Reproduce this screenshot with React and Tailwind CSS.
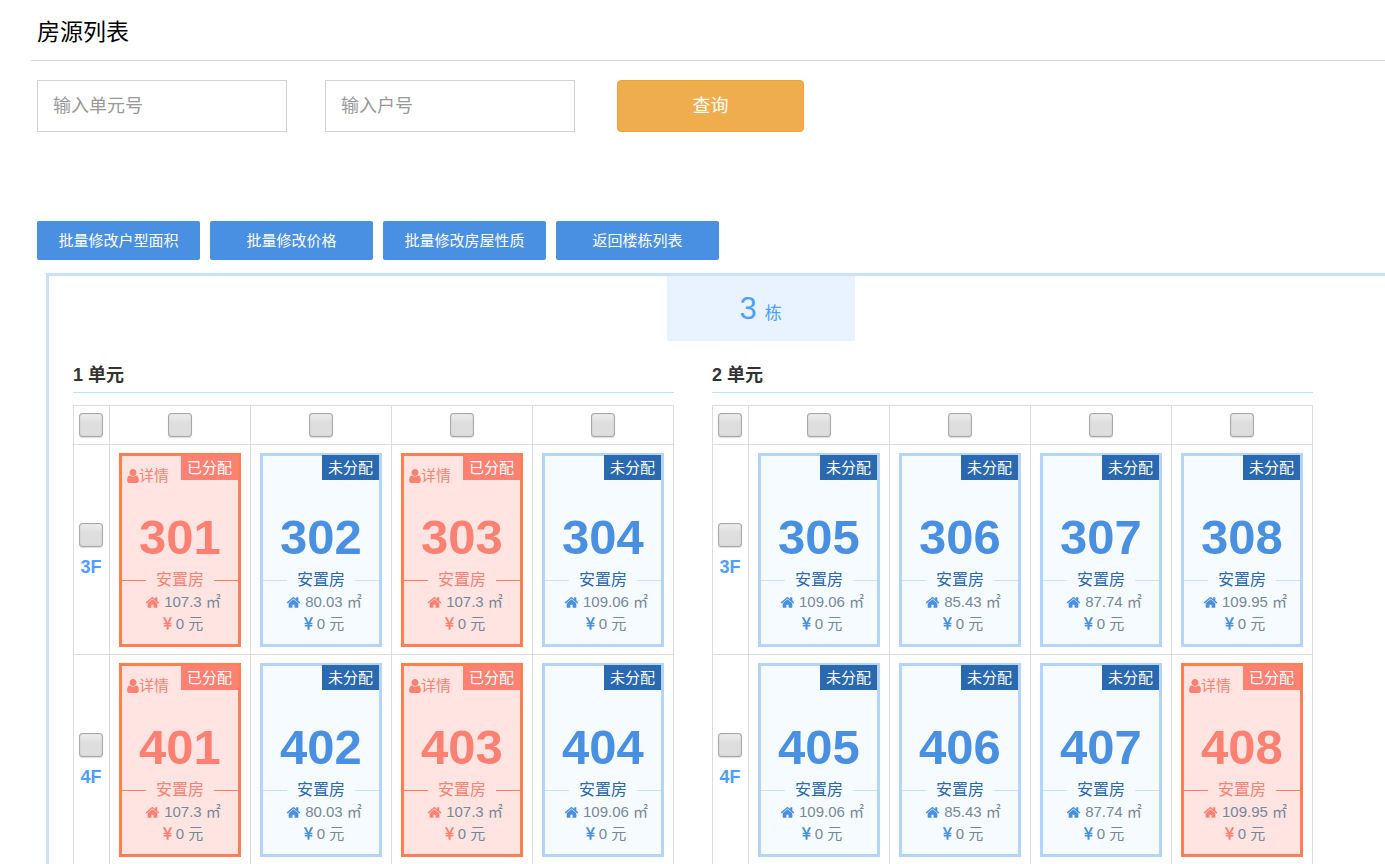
import React, { useState } from "react";

const HOME_PATH =
  "M1472 992v480q0 26-19 45t-45 19h-384v-384h-256v384h-384q-26 0-45-19t-19-45v-480q0-1 .5-3t.5-3l575-474 575 474q1 2 1 6zm223-69l-62 74q-8 9-21 11h-3q-13 0-21-7l-692-577-692 577q-12 8-24 7-13-2-21-11l-62-74q-8-10-7-23.5t11-21.5l719-599q32-26 76-26t76 26l244 204v-195q0-14 9-23t23-9h192q14 0 23 9t9 23v408l219 182q10 8 11 21.5t-7 23.5z";
const USER_PATH =
  "M1536 1399q0 109-62.5 187t-150.5 78h-854q-88 0-150.5-78t-62.5-187q0-85 8.5-160.5t31.5-152 58.5-131 94-89 134.5-34.5q131 128 313 128t313-128q76 0 134.5 34.5t94 89 58.5 131 31.5 152 8.5 160.5zm-256-887q0 159-112.5 271.5t-271.5 112.5-271.5-112.5-112.5-271.5 112.5-271.5 271.5-112.5 271.5 112.5 112.5 271.5z";
const YEN_PATH =
  "M985.5 1536h-172q-13 0-22.5-9t-9.5-23v-330h-288q-13 0-22.5-9t-9.5-23v-103q0-13 9.5-22.5t22.5-9.5h288v-85h-288q-13 0-22.5-9t-9.5-23v-104q0-13 9.5-22.5t22.5-9.5h214l-321-578q-8-16 0-32 10-16 28-16h194q19 0 29 18l215 425q19 38 56 125 10-24 30.5-68t27.5-61l191-420q8-19 29-19h191q17 0 27 16 9 14 1 31l-313 579h215q13 0 22.5 9.5t9.5 22.5v104q0 14-9.5 23t-22.5 9h-290v85h290q13 0 22.5 9.5t9.5 22.5v103q0 14-9.5 23t-22.5 9h-290v330q0 13-9.5 22.5t-22.5 9.5z";

const actions = ["批量修改户型面积", "批量修改价格", "批量修改房屋性质", "返回楼栋列表"];

const units = [
  {
    id: 1,
    floors: [
      {
        name: "3F",
        rooms: [
          { no: "301", area: "107.3", assigned: true },
          { no: "302", area: "80.03" },
          { no: "303", area: "107.3", assigned: true },
          { no: "304", area: "109.06" },
        ],
      },
      {
        name: "4F",
        rooms: [
          { no: "401", area: "107.3", assigned: true },
          { no: "402", area: "80.03" },
          { no: "403", area: "107.3", assigned: true },
          { no: "404", area: "109.06" },
        ],
      },
    ],
  },
  {
    id: 2,
    floors: [
      {
        name: "3F",
        rooms: [
          { no: "305", area: "109.06" },
          { no: "306", area: "85.43" },
          { no: "307", area: "87.74" },
          { no: "308", area: "109.95" },
        ],
      },
      {
        name: "4F",
        rooms: [
          { no: "405", area: "109.06" },
          { no: "406", area: "85.43" },
          { no: "407", area: "87.74" },
          { no: "408", area: "109.95", assigned: true },
        ],
      },
    ],
  },
];

function Checkbox(props) {
  return (
    <input
      type="checkbox"
      className="block size-6 mx-auto appearance-none rounded-[3px] border border-[#a9a9a9] bg-linear-to-b from-[#ededed] from-0% to-[#dedede] to-40% shadow-[0_1px_1px_#dddddd,inset_0_0_1px_#999999] checked:to-[#4a90e2]"
      {...props}
    />
  );
}

function RoomCard({ room }) {
  const on = room.assigned;
  const accent = on ? "text-[#fc8172]" : "text-[#4a90e2]";
  const line = on ? "bg-[#ff7f50]" : "bg-[#c6e2ff]";

  return (
    <div
      className={
        "relative h-[194px] border-3 text-center " +
        (on ? "border-[#ff7f50] bg-[#ffe4e1]" : "border-[#b3d4ff] bg-[#f6fbff]")
      }
    >
      {/* Status badge */}
      <span
        className={
          "absolute -top-px right-0 w-[57px] h-[25px] text-[15px] leading-[25px] text-white " +
          (on ? "bg-[#fc8172]" : "bg-[#2a68af]")
        }
      >
        {on ? "已分配" : "未分配"}
      </span>

      <div className="h-[53px] pt-2 pl-[5px]">
        {on && (
          <a href="#" className="flex w-max items-center text-[15px] leading-6 text-[#fc8172]">
            <svg viewBox="256 128 1280 1536" fill="currentColor" className="w-3 h-[14px]">
              <path d={USER_PATH} />
            </svg>
            详情
          </a>
        )}
      </div>

      <div className={"text-[49px] leading-[57px] font-bold " + accent}>{room.no}</div>

      {/* House type between two rules */}
      <div className="flex h-7 items-center">
        <span className={"h-px flex-1 " + line}></span>
        <span className={"w-[68px] text-[16px] leading-6 " + (on ? "text-[#fc8172]" : "text-[#2a68af]")}>
          安置房
        </span>
        <span className={"h-px flex-1 " + line}></span>
      </div>

      <div className="-mt-[3px] flex items-center justify-center gap-1 pl-[6px] text-[15px] leading-[22px] text-[#778899]">
        <svg viewBox="0 0 1792 1792" fill="currentColor" className={"size-[15px] " + accent}>
          <path d={HOME_PATH} />
        </svg>
        {room.area} ㎡
      </div>
      <div className="flex items-center justify-center gap-1 pl-[6px] text-[15px] leading-[22px] text-[#778899]">
        <svg viewBox="384 0 1024 1792" fill="currentColor" className={"w-[9px] h-4 " + accent}>
          <path d={YEN_PATH} />
        </svg>
        0 元
      </div>
    </div>
  );
}

function Unit({ unit }) {
  return (
    <section className="flex-1">
      <h2 className="border-b border-[#b3e5fc] text-[18px] leading-[34px] font-bold text-[#333333]">
        {unit.id} 单元
      </h2>
      <table className="mt-3 w-full table-fixed border-collapse">
        <thead>
          <tr>
            <th className="w-[36px] h-[39px] border border-[#dddddd] p-0 pr-px">
              <Checkbox aria-label={unit.id + "单元全选"} />
            </th>
            {unit.floors[0].rooms.map((room, i) => (
              <th key={room.no} className="border border-[#dddddd] p-0">
                <Checkbox aria-label={unit.id + "单元第" + (i + 1) + "列"} />
              </th>
            ))}
          </tr>
        </thead>
        <tbody>
          {unit.floors.map((floor) => {
            const id = "floor-" + unit.id + "-" + floor.name;
            return (
              <tr key={floor.name}>
                <td className="border border-[#dddddd] p-0 pt-[2px] pr-px text-center">
                  <Checkbox id={id} />
                  <label htmlFor={id} className="mt-2 block text-[18px] leading-6 font-bold text-[#4d9fff]">
                    {floor.name}
                  </label>
                </td>
                {floor.rooms.map((room) => (
                  <td key={room.no} className="border border-[#dddddd] px-[9px] pt-2 pb-[7px]">
                    <RoomCard room={room} />
                  </td>
                ))}
              </tr>
            );
          })}
        </tbody>
      </table>
    </section>
  );
}

function App() {
  const [unitNo, setUnitNo] = useState("");
  const [roomNo, setRoomNo] = useState("");

  const inputClass =
    "w-[250px] h-[52px] border border-[#d3d3d3] bg-white px-[15px] text-[18px] text-[#333333] placeholder:text-[#999999]";

  return (
    <div className="h-screen overflow-x-hidden overflow-y-auto [scrollbar-width:none] bg-white font-['Liberation_Sans','Noto_Sans_CJK_SC',sans-serif]">
      <h1 className="ml-[31px] border-b border-[#d8d8d8] pt-3 pb-2 pl-[6px] text-[23px] leading-10 text-black">
        房源列表
      </h1>

      {/* Search */}
      <form className="mt-[19px] flex pl-[37px]" onSubmit={(e) => e.preventDefault()}>
        <input
          type="text"
          aria-label="单元号"
          placeholder="输入单元号"
          value={unitNo}
          onChange={(e) => setUnitNo(e.target.value)}
          className={inputClass}
        />
        <input
          type="text"
          aria-label="户号"
          placeholder="输入户号"
          value={roomNo}
          onChange={(e) => setRoomNo(e.target.value)}
          className={inputClass + " ml-[38px]"}
        />
        <button
          type="submit"
          className="ml-[42px] w-[187px] h-[52px] rounded-[4px] border border-[#eba23b] bg-[#f0ad4e] text-[18px] text-white"
        >
          查询
        </button>
      </form>

      {/* Batch actions */}
      <div className="mt-[89px] flex gap-[10px] pl-[37px]">
        {actions.map((text) => (
          <button
            key={text}
            type="button"
            className="w-[163px] h-[39px] rounded-[2px] bg-[#4a90e2] pt-px text-[15px] text-white"
          >
            {text}
          </button>
        ))}
      </div>

      {/* Building */}
      <div className="mt-[13px] ml-[46px] -mr-[90px] border-3 border-[#c6e2ff] pl-6 pr-[159px]">
        <div className="-mr-[135px] flex justify-center">
          <div className="flex h-[65px] w-[188px] items-baseline justify-center gap-2 bg-[#e8f3ff] text-[#4d9fff]">
            <span className="text-[31px] leading-[66px]">3</span>
            <span className="text-[17px]">栋</span>
          </div>
        </div>
        <div className="mt-[17px] flex gap-[38px]">
          {units.map((unit) => (
            <Unit key={unit.id} unit={unit} />
          ))}
        </div>
      </div>
    </div>
  );
}

export default App;
